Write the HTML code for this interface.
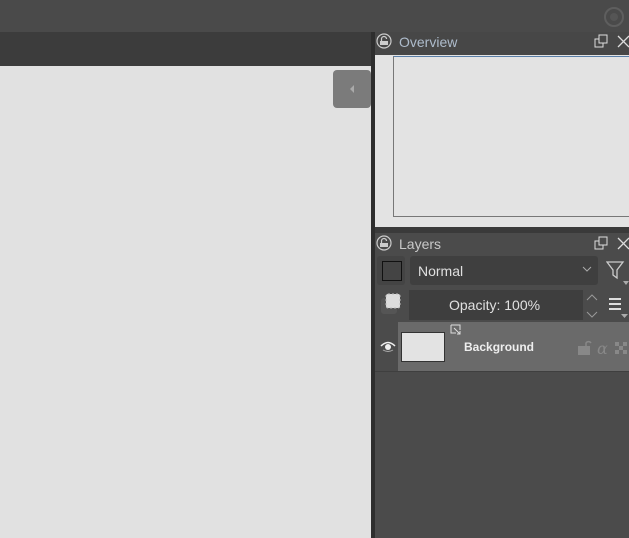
<html><head><style>
body{margin:0;width:629px;height:538px;background:#4b4b4b;position:relative;overflow:hidden;font-family:"Liberation Sans","DejaVu Sans",sans-serif}
div{position:absolute;box-sizing:border-box}
.t{color:#c8c8c8;font-size:14px}
</style></head><body>
<div style="left:0;top:0;width:629px;height:32px;background:#4a4a4a"></div>
<div style="left:604;top:7px;left:604px;width:20px;height:20px;border-radius:50%;border:2px solid #5e5e5e"></div>
<div style="left:610px;top:13px;width:8px;height:8px;border-radius:50%;background:#555"></div>
<div style="left:0;top:32px;width:371px;height:34px;background:#3c3c3c"></div>
<div style="left:0;top:66px;width:371px;height:472px;background:#e1e1e1"></div>
<div style="left:333px;top:70px;width:38px;height:38px;background:#7b7b7b;border-radius:4px"></div>
<div style="left:350px;top:85px;width:0;height:0;border-top:4px solid transparent;border-bottom:4px solid transparent;border-right:4px solid #aaa"></div>
<div style="left:371px;top:32px;width:4px;height:506px;background:#2e2e2e"></div>
<!-- overview -->
<div style="left:375px;top:32px;width:254px;height:23px;background:#474747"></div>
<svg style="position:absolute;left:376px;top:33px" width="18" height="18"><circle cx="8" cy="8" r="7" fill="none" stroke="#ccc" stroke-width="1.2"/><rect x="4" y="8" width="8" height="4" fill="#ccc"/><path d="M5.5 8V6a2.5 2.5 0 0 1 5 0" fill="none" stroke="#ccc" stroke-width="1.2"/></svg>
<div class="t" style="left:399px;top:34px;color:#aebccc">Overview</div>
<svg style="position:absolute;left:594px;top:34px" width="35" height="16"><rect x="1" y="5" width="8" height="8" fill="none" stroke="#ddd"/><rect x="5" y="1" width="8" height="8" fill="#474747" stroke="#ddd"/><path d="M24 2l11 11M35 2L24 13" stroke="#ddd" stroke-width="1.3"/></svg>
<div style="left:375px;top:55px;width:254px;height:172px;background:#e3e3e3"></div>
<div style="left:393px;top:56px;width:240px;height:161px;border:1px solid #777;border-top-color:#5a7fa8;background:#e3e3e3"></div>
<div style="left:375px;top:227px;width:254px;height:6px;background:#3a3a3a"></div>
<!-- layers -->
<svg style="position:absolute;left:376px;top:235px" width="18" height="18"><circle cx="8" cy="8" r="7" fill="none" stroke="#ccc" stroke-width="1.2"/><rect x="4" y="8" width="8" height="4" fill="#ccc"/><path d="M5.5 8V6a2.5 2.5 0 0 1 5 0" fill="none" stroke="#ccc" stroke-width="1.2"/></svg>
<div class="t" style="left:399px;top:236px">Layers</div>
<svg style="position:absolute;left:594px;top:236px" width="35" height="16"><rect x="1" y="5" width="8" height="8" fill="none" stroke="#ddd"/><rect x="5" y="1" width="8" height="8" fill="#4b4b4b" stroke="#ddd"/><path d="M24 2l11 11M35 2L24 13" stroke="#ddd" stroke-width="1.3"/></svg>
<div style="left:377px;top:256px;width:28px;height:29px;background:#444;border-radius:3px"></div>
<div style="left:382px;top:261px;width:20px;height:20px;border:1px solid #111"></div>
<div style="left:410px;top:256px;width:188px;height:29px;background:#3f3f3f;border-radius:3px"></div>
<div class="t" style="left:418px;top:263px;color:#e0e0e0">Normal</div>
<svg style="position:absolute;left:582px;top:265px" width="10" height="8"><path d="M1 2l4 4 4-4" fill="none" stroke="#aaa"/></svg>
<svg style="position:absolute;left:606px;top:260px" width="23" height="26"><path d="M1 2h16l-6 8v8l-4-3v-5z" fill="none" stroke="#ccc" stroke-width="1.3"/><path d="M17 21h6l-3 4z" fill="#aaa"/></svg>
<svg style="position:absolute;left:380px;top:291px" width="24" height="26"><rect x="1" y="7" width="16" height="16" rx="3" fill="#555"/><rect x="6" y="3" width="14" height="14" rx="2" fill="#ddd" stroke="#bbb" stroke-dasharray="2 2"/></svg>
<div style="left:409px;top:290px;width:174px;height:30px;background:#3e3e3e"></div>
<div class="t" style="left:449px;top:297px;color:#e0e0e0">Opacity: 100%</div>
<svg style="position:absolute;left:585px;top:292px" width="14" height="28"><path d="M2 8l5-5 5 5M2 20l5 5 5-5" fill="none" stroke="#999"/></svg>
<svg style="position:absolute;left:609px;top:297px" width="20" height="22"><path d="M0 2h12M0 7h12M0 12h12" stroke="#ddd" stroke-width="2"/><path d="M12 17h7l-3.5 4z" fill="#aaa"/></svg>
<div style="left:398px;top:322px;width:231px;height:49px;background:#6a6a6a"></div>
<div style="left:375px;top:371px;width:254px;height:1px;background:#3f3f3f"></div>
<svg style="position:absolute;left:380px;top:340px" width="16" height="14"><path d="M1 6q7-7 14 0" fill="none" stroke="#eee" stroke-width="1.5"/><circle cx="8" cy="7" r="3" fill="#eee"/><path d="M3 10q5 3 10 0" fill="none" stroke="#aaa"/></svg>
<div style="left:401px;top:332px;width:44px;height:30px;background:#e3e3e3;border:1px solid #333"></div>
<svg style="position:absolute;left:450px;top:324px" width="12" height="12"><path d="M1 1h9v5M1 1v8h5M4 4l6 6M10 7v3h-3" fill="none" stroke="#ddd"/></svg>
<div style="left:464px;top:340px;color:#eee;font-size:12px;font-weight:bold">Background</div>
<svg style="position:absolute;left:577px;top:340px" width="52" height="16"><rect x="1" y="6" width="12" height="9" fill="#888"/><path d="M9 6V3a3 3 0 0 1 5 0" fill="none" stroke="#888" stroke-width="1.5"/><text x="20" y="14" fill="#888" font-size="16" font-style="italic" font-family="DejaVu Serif">α</text><g fill="#888"><rect x="38" y="2" width="4" height="4"/><rect x="46" y="2" width="4" height="4"/><rect x="42" y="6" width="4" height="4"/><rect x="38" y="10" width="4" height="4"/><rect x="46" y="10" width="4" height="4"/></g></svg>
</body></html>
